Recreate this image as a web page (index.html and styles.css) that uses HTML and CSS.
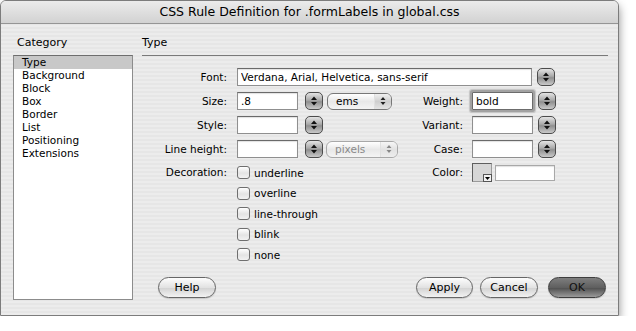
FILE: index.html
```html
<!DOCTYPE html>
<html lang="en">
<head>
    <meta charset="UTF-8">
    <title>CSS Rule Definition</title>
    <link rel="stylesheet" href="styles.css">
</head>
<body>
    <div class="window">
        <div class="titlebar">CSS Rule Definition for .formLabels in global.css</div>

        <div class="dialog">
            <div class="sidebar">
                <div class="heading category-heading">Category</div>
                <ul class="category-list">
                    <li class="selected">Type</li>
                    <li>Background</li>
                    <li>Block</li>
                    <li>Box</li>
                    <li>Border</li>
                    <li>List</li>
                    <li>Positioning</li>
                    <li>Extensions</li>
                </ul>
            </div>

            <div class="panel">
                <div class="heading panel-title">Type</div>

                <div class="form">
                    <!-- Font -->
                    <div class="lbl">Font:</div>
                    <div class="ctl wide">
                        <input class="field font-field" type="text" value="Verdana, Arial, Helvetica, sans-serif">
                        <span class="stepper gap5"><svg width="8" height="12" viewBox="0 0 8 12"><path d="M4 1.5 7 5H1z M4 10.5 7 7H1z"/></svg></span>
                    </div>

                    <!-- Size / Weight -->
                    <div class="lbl">Size:</div>
                    <div class="ctl">
                        <input class="field short" type="text" value=".8">
                        <span class="stepper gap7"><svg width="8" height="12" viewBox="0 0 8 12"><path d="M4 1.5 7 5H1z M4 10.5 7 7H1z"/></svg></span>
                        <div class="popup ems">
                            <span class="popup-value">ems</span>
                            <span class="popup-arrows"><svg width="6" height="10" viewBox="0 0 6 10"><path d="M3 1 5.5 4H.5z M3 9 5.5 6H.5z"/></svg></span>
                        </div>
                    </div>
                    <div class="lbl right">Weight:</div>
                    <div class="ctl">
                        <input class="field short focused" type="text" value="bold">
                        <span class="stepper gap5"><svg width="8" height="12" viewBox="0 0 8 12"><path d="M4 1.5 7 5H1z M4 10.5 7 7H1z"/></svg></span>
                    </div>

                    <!-- Style / Variant -->
                    <div class="lbl">Style:</div>
                    <div class="ctl">
                        <input class="field short" type="text">
                        <span class="stepper gap7"><svg width="8" height="12" viewBox="0 0 8 12"><path d="M4 1.5 7 5H1z M4 10.5 7 7H1z"/></svg></span>
                    </div>
                    <div class="lbl right">Variant:</div>
                    <div class="ctl">
                        <input class="field short" type="text">
                        <span class="stepper gap5"><svg width="8" height="12" viewBox="0 0 8 12"><path d="M4 1.5 7 5H1z M4 10.5 7 7H1z"/></svg></span>
                    </div>

                    <!-- Line height / Case -->
                    <div class="lbl">Line height:</div>
                    <div class="ctl">
                        <input class="field short" type="text">
                        <span class="stepper gap7"><svg width="8" height="12" viewBox="0 0 8 12"><path d="M4 1.5 7 5H1z M4 10.5 7 7H1z"/></svg></span>
                        <div class="popup pixels disabled">
                            <span class="popup-value">pixels</span>
                            <span class="popup-arrows"><svg width="6" height="10" viewBox="0 0 6 10"><path d="M3 1 5.5 4H.5z M3 9 5.5 6H.5z"/></svg></span>
                        </div>
                    </div>
                    <div class="lbl right">Case:</div>
                    <div class="ctl">
                        <input class="field short" type="text">
                        <span class="stepper gap5"><svg width="8" height="12" viewBox="0 0 8 12"><path d="M4 1.5 7 5H1z M4 10.5 7 7H1z"/></svg></span>
                    </div>

                    <!-- Decoration / Color -->
                    <div class="lbl check-lbl">Decoration:</div>
                    <label class="check-row"><span class="checkbox"></span>underline</label>
                    <div class="lbl right check-lbl">Color:</div>
                    <div class="ctl color-ctl">
                        <span class="swatch">
                            <svg class="swatch-arrow" width="9" height="8" viewBox="0 0 9 8"><rect x="0.5" y="0.5" width="8" height="7" fill="#f2f2f2" stroke="#555"/><path d="M2 3h5L4.5 6z" fill="#000"/></svg>
                        </span>
                        <input class="field color-field" type="text">
                    </div>

                    <label class="check-row"><span class="checkbox"></span>overline</label>
                    <label class="check-row"><span class="checkbox"></span>line-through</label>
                    <label class="check-row"><span class="checkbox"></span>blink</label>
                    <label class="check-row"><span class="checkbox"></span>none</label>
                </div>

                <div class="buttons">
                    <button class="btn">Help</button>
                    <button class="btn btn-apply">Apply</button>
                    <button class="btn btn-cancel">Cancel</button>
                    <button class="btn btn-ok">OK</button>
                </div>
            </div>
        </div>
    </div>
</body>
</html>
```

FILE: styles.css
```css
body {
    margin: 0;
    background: #fff;
    font-family: "Lucida Grande", "DejaVu Sans", sans-serif;
    font-size: 10.5px;
    color: #000;
}

.window {
    width: 619px;
    height: 316px;
    box-sizing: border-box;
    border: 1px solid #7c7c7c;
    border-radius: 6px 6px 0 0;
    overflow: hidden;
    background: repeating-linear-gradient(to bottom, #ececec 0, #ececec 2px, #e6e6e6 2px, #e6e6e6 4px);
    box-shadow: 0 5px 10px rgba(0,0,0,0.45);
}

.titlebar {
    height: 22px;
    line-height: 22px;
    text-align: center;
    font-size: 12.5px;
    background: linear-gradient(#ebebeb, #d2d2d2);
    border-bottom: 1px solid #959595;
}

.dialog {
    display: flex;
    padding: 12px 10px 0 12px;
}

.sidebar {
    width: 120px;
    margin-right: 9px;
}

.heading {
    line-height: 14px;
    font-size: 11px;
}

.category-heading {
    padding-left: 4px;
    margin-bottom: 5px;
}

.category-list {
    list-style: none;
    margin: 0;
    padding: 0;
    height: 245px;
    box-sizing: border-box;
    border: 1px solid #8c8c8c;
    border-top-color: #6e6e6e;
    background: #fff;
}

.category-list li {
    padding-left: 8px;
    line-height: 13px;
}

.category-list li.selected {
    background: #c8c8c8;
}

.panel {
    flex: 1;
}

.panel-title {
    padding-bottom: 5px;
    border-bottom: 1px solid #7a7a7a;
}

.form {
    display: grid;
    grid-template-columns: 95px 161px 74px 1fr;
    grid-template-rows: repeat(4, 24px) repeat(5, 20.5px);
    align-items: start;
    margin-top: 12px;
}

.lbl {
    grid-column: 1;
    text-align: right;
    padding-right: 10px;
    line-height: 18px;
}

.lbl.right {
    grid-column: 3;
    padding-right: 9px;
}

.check-lbl {
    line-height: 15px;
    margin-top: 1px;
}

.ctl {
    display: flex;
    align-items: center;
    height: 18px;
}

.ctl.wide {
    grid-column: 2 / span 3;
}

.field {
    height: 18px;
    box-sizing: border-box;
    margin: 0;
    padding: 0 3px;
    border: 1px solid #8f8f8f;
    border-top-color: #6a6a6a;
    background: #fff;
    font: inherit;
    color: #000;
    outline: none;
    box-shadow: inset 0 1px 1px rgba(0,0,0,0.12);
}

.font-field {
    width: 295px;
}

.short {
    width: 61px;
}

.focused {
    border-color: #6c6c6c;
    box-shadow: 0 0 0 2px #a2a2a2, 0 0 1px 3px #c4c4c4;
    border-radius: 1px;
}

.stepper {
    width: 18px;
    height: 18px;
    box-sizing: border-box;
    display: flex;
    align-items: center;
    justify-content: center;
    border: 1px solid #4c4c4c;
    border-radius: 5px;
    background: linear-gradient(#e4e4e4, #a9a9a9 45%, #8f8f8f 55%, #c9c9c9);
}

.stepper path {
    fill: #111;
}

.gap5 {
    margin-left: 5px;
}

.gap7 {
    margin-left: 7px;
}

.popup {
    display: flex;
    height: 17px;
    box-sizing: border-box;
    border: 1px solid #777;
    border-radius: 6px;
    background: linear-gradient(#ffffff, #e8e8e8 50%, #f4f4f4);
    line-height: 15px;
    overflow: hidden;
}

.popup-value {
    flex: 1;
    padding-left: 8px;
}

.popup-arrows {
    width: 16px;
    display: flex;
    align-items: center;
    justify-content: center;
    border-left: 1px solid #e0e0e0;
    background: linear-gradient(#f0f0f0, #cfcfcf 50%, #e4e4e4);
}

.popup-arrows path {
    fill: #222;
}

.ems {
    width: 65px;
    margin-left: 4px;
}

.pixels {
    width: 72px;
    margin-left: 3px;
}

.popup.disabled {
    color: #8a8a8a;
    border-color: #a8a8a8;
}

.popup.disabled .popup-arrows {
    background: linear-gradient(#f6f6f6, #e2e2e2 50%, #ededed);
}

.popup.disabled path {
    fill: #888;
}

.check-row {
    grid-column: 2;
    display: flex;
    align-items: center;
    height: 15px;
    margin-top: 1px;
}

.checkbox {
    width: 13px;
    height: 13px;
    box-sizing: border-box;
    margin-right: 4px;
    border: 1px solid #6f6f6f;
    border-radius: 3px;
    background: linear-gradient(#ffffff, #e4e4e4 55%, #f2f2f2);
}

.color-ctl {
    grid-column: 4;
    margin-top: -1px;
    height: 19px;
}

.swatch {
    position: relative;
    width: 20px;
    height: 19px;
    box-sizing: border-box;
    border: 1px solid #5e5e5e;
    border-right-color: #9a9a9a;
    border-bottom-color: #9a9a9a;
    background: #d6d6d6;
}

.swatch-arrow {
    position: absolute;
    right: -1px;
    bottom: -1px;
}

.color-field {
    width: 60px;
    height: 16px;
    margin-left: 3px;
    border-color: #a8a8a8;
}

.buttons {
    display: flex;
    margin-top: 10.5px;
    padding-left: 16px;
    padding-right: 2px;
}

.btn {
    width: 58px;
    height: 21px;
    box-sizing: border-box;
    padding: 0;
    border: 1px solid #666;
    border-radius: 11px;
    background: linear-gradient(#fdfdfd, #e2e2e2 50%, #d2d2d2 52%, #f2f2f2);
    font: inherit;
    font-size: 11px;
    color: #000;
    box-shadow: 0 1px 1px rgba(0,0,0,0.15);
}

.btn-apply {
    width: 57px;
    margin-left: auto;
}

.btn-cancel {
    margin-left: 7px;
}

.btn-ok {
    margin-left: 10px;
    border-color: #3e3e3e;
    background: linear-gradient(#7e7e7e, #5f5f5f 50%, #4f4f4f 52%, #9a9a9a);
    color: #111;
}
```
